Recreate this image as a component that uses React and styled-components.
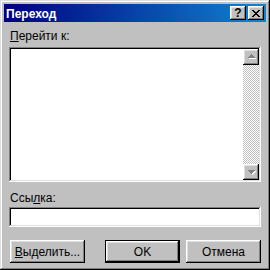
import React from 'react'
import styled, { createGlobalStyle } from 'styled-components'

const GlobalStyle = createGlobalStyle`
  html, body {
    margin: 0;
    padding: 0;
    background: #c0c0c0;
  }
  body {
    font-family: "Liberation Sans", Arial, sans-serif;
    font-size: 12px;
    color: #000;
  }
`

const raised = `
  box-shadow: inset -1px -1px #000, inset 1px 1px #fff,
    inset -2px -2px #808080, inset 2px 2px #dfdfdf;
`

const sunken = `
  box-shadow: inset -1px -1px #fff, inset 1px 1px #808080,
    inset -2px -2px #dfdfdf, inset 2px 2px #000;
`

const Window = styled.div`
  width: 270px;
  height: 270px;
  box-sizing: border-box;
  padding: 4px;
  background: #c0c0c0;
  display: flex;
  flex-direction: column;
  box-shadow: inset -1px -1px #000, inset 1px 1px #dfdfdf,
    inset -2px -2px #808080, inset 2px 2px #fff;
`

const TitleBar = styled.div`
  height: 18px;
  display: flex;
  align-items: center;
  justify-content: space-between;
  padding: 0 2px;
  background: linear-gradient(90deg, #000080, #1084d0);
`

const Title = styled.span`
  color: #fff;
  font-weight: bold;
  font-size: 12px;
  padding-top: 1px;
`

const TitleButtons = styled.div`
  display: flex;
  gap: 2px;
`

const TitleButton = styled.div`
  width: 16px;
  height: 14px;
  box-sizing: border-box;
  background: #c0c0c0;
  ${raised}
  display: flex;
  align-items: center;
  justify-content: center;
  font-weight: bold;
  font-size: 12px;
  line-height: 14px;
`

const Body = styled.div`
  flex: 1;
  display: flex;
  flex-direction: column;
  padding: 7px 5px 0 5px;
`

const Label = styled.div`
  line-height: 14px;
  padding-left: 1px;
  margin-bottom: ${p => p.$gap}px;
`

const ListBox = styled.div`
  height: 135px;
  box-sizing: border-box;
  padding: 2px;
  background: #fff;
  ${sunken}
  display: flex;
  justify-content: flex-end;
  margin-bottom: 9px;
`

const ScrollBar = styled.div`
  width: 16px;
  display: flex;
  flex-direction: column;
  background-color: #c0c0c0;
  background-image: conic-gradient(#fff 25%, #c0c0c0 0 50%, #fff 0 75%, #c0c0c0 0);
  background-size: 2px 2px;
`

const ScrollButton = styled.div`
  width: 16px;
  height: 16px;
  box-sizing: border-box;
  background: #c0c0c0;
  ${raised}
  display: flex;
  align-items: center;
  justify-content: center;
`

const Track = styled.div`
  flex: 1;
`

const Input = styled.div`
  height: 20px;
  box-sizing: border-box;
  background: #fff;
  ${sunken}
  margin-bottom: 13px;
`

const ButtonRow = styled.div`
  display: flex;
  gap: 6px;
  padding-left: 1px;
`

const Button = styled.div`
  width: 75px;
  height: 23px;
  box-sizing: border-box;
  background: #c0c0c0;
  display: flex;
  align-items: center;
  justify-content: center;
  margin-left: ${p => (p.$push ? 'auto' : '0')};
  ${raised}
  ${p =>
    p.$default &&
    `
    box-shadow: inset 0 0 0 1px #000, inset -2px -2px #000, inset 2px 2px #fff,
      inset -3px -3px #808080, inset 3px 3px #dfdfdf;
  `}
`

const Arrow = ({ down }) => (
  <svg width="9" height="6" viewBox="0 0 9 6" shapeRendering="crispEdges">
    {down ? (
      <>
        <path d="M2 2h7v1H8v1H7v1H6v1H5V5H4V4H3V3H2z" fill="#fff" />
        <path d="M1 1h7v1H7v1H6v1H5v1H4V4H3V3H2V2H1z" fill="#808080" />
      </>
    ) : (
      <>
        <path d="M5 1h1v1h1v1h1v1h1v1H2V4h1V3h1V2h1z" fill="#fff" />
        <path d="M4 0h1v1h1v1h1v1h1v1H1V3h1V2h1V1h1z" fill="#808080" />
      </>
    )}
  </svg>
)

const CloseIcon = () => (
  <svg width="8" height="7" viewBox="0 0 8 7" shapeRendering="crispEdges">
    <path
      d="M0 0h2v1h1v1h2V1h1V0h2v1H7v1H6v1H5v1h1v1h1v1h1v1H6V6H5V5H3v1H2v1H0V6h1V5h1V4h1V3H2V2H1V1H0z"
      fill="#000"
    />
  </svg>
)

const App = () => (
  <>
    <GlobalStyle />
    <Window>
      <TitleBar>
        <Title>Переход</Title>
        <TitleButtons>
          <TitleButton>?</TitleButton>
          <TitleButton>
            <CloseIcon />
          </TitleButton>
        </TitleButtons>
      </TitleBar>
      <Body>
        <Label $gap={4}>
          <u>П</u>ерейти к:
        </Label>
        <ListBox>
          <ScrollBar>
            <ScrollButton>
              <Arrow />
            </ScrollButton>
            <Track />
            <ScrollButton>
              <Arrow down />
            </ScrollButton>
          </ScrollBar>
        </ListBox>
        <Label $gap={2}>
          Ссы<u>л</u>ка:
        </Label>
        <Input />
        <ButtonRow>
          <Button>
            <span>
              <u>В</u>ыделить...
            </span>
          </Button>
          <Button $default $push>
            OK
          </Button>
          <Button>Отмена</Button>
        </ButtonRow>
      </Body>
    </Window>
  </>
)

export default App
